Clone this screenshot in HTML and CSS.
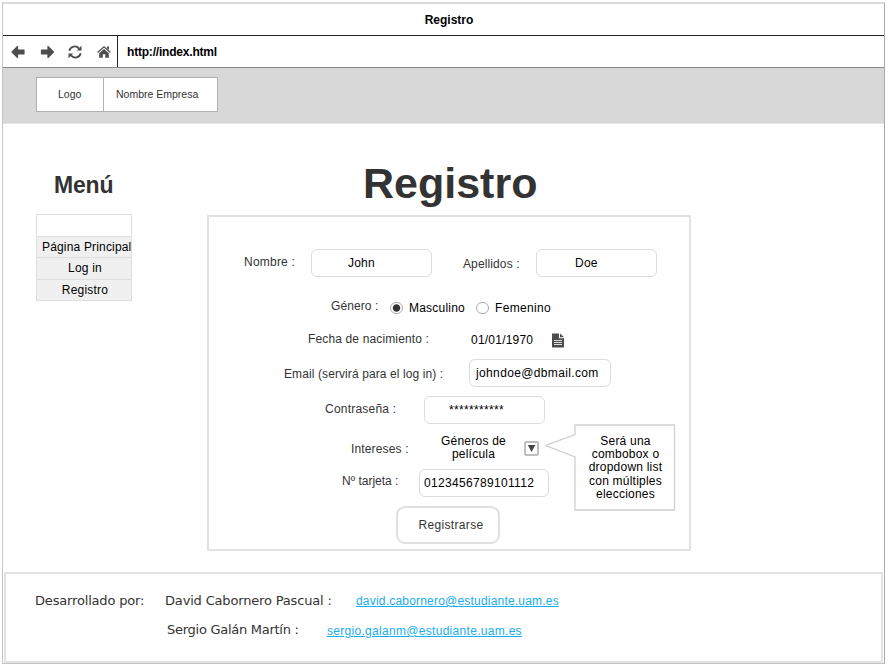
FILE: index.html
```html
<!DOCTYPE html>
<html lang="es">
<head>
<meta charset="utf-8">
<title>Registro</title>
<link rel="stylesheet" href="styles.css">
</head>
<body>
<div class="window">
  <div class="titlebar">Registro</div>
  <div class="toolbar">
    <div class="nav">
      <svg width="14" height="14" viewBox="0 0 14 14"><path class="round" d="M1 7 6.500 1.500V5H13V9H6.500V12.500Z"/></svg>
      <svg width="14" height="14" viewBox="0 0 14 14"><path class="round" d="M13.500 7 8 1.500V5H1.500V9H8V12.500Z"/></svg>
      <svg width="14" height="14" viewBox="0 0 14 14"><path class="stroke" d="M1.300 5.800A5.500 5.500 0 0 1 11 3.600M12.700 8.200A5.500 5.500 0 0 1 3 10.400"/><path d="M13.500.8V5.500H8.800ZM.5 13.200V8.500H5.200Z"/></svg>
      <svg width="14" height="14" viewBox="0 0 14 14"><path class="roof" d="M.6 7.400 7 1.800 13.400 7.400"/><path d="M10 1.500H12V5L10 3.300ZM7 4 11.800 8.200V12.800H8.300V9.300H5.700V12.800H2.200V8.200Z"/></svg>
    </div>
    <div class="address">http://index.html</div>
  </div>
  <header class="header">
    <div class="brand">
      <div class="logo">Logo</div>
      <div class="company">Nombre Empresa</div>
    </div>
  </header>
  <div class="body">
    <aside class="sidebar">
      <h2>Menú</h2>
      <ul class="menu">
        <li class="blank"></li>
        <li class="main-page">Página Principal</li>
        <li>Log in</li>
        <li>Registro</li>
      </ul>
    </aside>
    <main class="content">
      <h1>Registro</h1>
      <form class="panel">
        <div class="row row-name">
          <label class="l-name">Nombre :</label>
          <div class="field f-name">John</div>
          <label class="l-last">Apellidos :</label>
          <div class="field f-last">Doe</div>
        </div>
        <div class="row row-gender">
          <label class="l-gender">Género :</label>
          <span class="radio checked"></span><span class="male">Masculino</span>
          <span class="radio"></span><span class="female">Femenino</span>
        </div>
        <div class="row row-birth">
          <label class="l-birth">Fecha de nacimiento :</label>
          <span class="date">01/01/1970</span>
          <svg width="13" height="15" viewBox="0 0 13 15"><path fill="#4d4d4d" d="M0 .5H7V5.200H12V14.500H0ZM8 .5 12 4.300H8Z"/><path stroke="#ddd" d="M2 7.500H10M2 9.500H10M2 11.500H10"/></svg>
        </div>
        <div class="row row-email">
          <label class="l-email">Email (servirá para el log in) :</label>
          <div class="field f-email">johndoe@dbmail.com</div>
        </div>
        <div class="row row-pass">
          <label class="l-pass">Contraseña :</label>
          <div class="field f-pass">***********</div>
        </div>
        <div class="row row-interest">
          <label class="l-interest">Intereses :</label>
          <div class="genres">Géneros de<br>película</div>
          <svg class="drop" width="15" height="15" viewBox="0 0 15 15"><rect x="1" y="1" width="13" height="13" rx="1" fill="#fff" stroke="#aaa" stroke-width="1.500"/><path fill="#444" d="M3.800 4H11.300L7.600 11Z"/></svg>
          <div class="callout">
            <svg width="132" height="88" viewBox="0 0 132 88"><path fill="#fff" stroke="#d0d0d0" stroke-width="1.300" d="M30 1H129.500V86H30V33L.8 21.500 30 10.500Z"/></svg>
            <p>Será una<br>combobox o<br>dropdown list<br>con múltiples<br>elecciones</p>
          </div>
        </div>
        <div class="row row-card">
          <label class="l-card">Nº tarjeta :</label>
          <div class="field f-card">0123456789101112</div>
        </div>
        <button type="button" class="submit">Registrarse</button>
      </form>
    </main>
  </div>
  <footer class="footer">
    <span class="dev">Desarrollado por:</span>
    <div class="people">
      <div class="person"><span class="p1">David Cabornero Pascual :</span><a class="a1">david.cabornero@estudiante.uam.es</a></div>
      <div class="person second"><span class="p2">Sergio Galán Martín :</span><a class="a2">sergio.galanm@estudiante.uam.es</a></div>
    </div>
  </footer>
</div>
</body>
</html>
```
FILE: styles.css
```css
* { box-sizing: border-box; }
body {
  margin: 0;
  background: #fff;
  color: #000;
  font: 12px/14px "Liberation Sans", Arial, sans-serif;
  letter-spacing: .22px;
}
h1, h2, p, ul { margin: 0; padding: 0; }
.window {
  width: 883px;
  height: 662px;
  margin: 2px 0 0 2px;
  border: 1px solid #c4c4c4;
  border-top: 2px solid #dadada;
  border-right-color: #aaa;
  white-space: nowrap;
}
.titlebar {
  height: 32px;
  padding-left: 11px;
  border-bottom: 1px solid #222;
  font-weight: bold;
  letter-spacing: 0;
  line-height: 32px;
  text-align: center;
}
.toolbar {
  display: flex;
  height: 32px;
  border-bottom: 1px solid #888;
  font-weight: bold;
  letter-spacing: 0;
}
.nav {
  display: flex;
  align-items: center;
  gap: 14.500px;
  width: 115px;
  padding-left: 8px;
  border-right: 1px solid #222;
}
.nav svg { flex: none; fill: #4d4d4d; }
.nav .round { stroke: #4d4d4d; stroke-width: 1.200; stroke-linejoin: round; }
.nav .stroke { fill: none; stroke: #4d4d4d; stroke-width: 1.800; }
.nav .roof { fill: none; stroke: #4d4d4d; stroke-width: 1.300; }
.address { padding-left: 9px; line-height: 32px; letter-spacing: -.2px; }
.header {
  height: 56px;
  padding: 9px 0 0 33px;
  background: #d8d8d8;
  border-bottom: 1px solid #e4e4e4;
}
.brand {
  display: flex;
  width: 182px;
  height: 35px;
  border: 1px solid #b0b0b0;
  background: #fff;
  color: #333;
  font-size: 10.500px;
  line-height: 33px;
  letter-spacing: 0;
}
.logo { width: 67px; padding-left: 21px; border-right: 1px solid #b0b0b0; }
.company { padding-left: 12px; }
.body { display: flex; height: 448px; }
.sidebar { width: 204px; padding: 48px 0 0 33px; }
h2 {
  padding-left: 18px;
  color: #333;
  font-size: 23px;
  line-height: 26px;
  letter-spacing: -.2px;
}
.menu {
  width: 96px;
  height: 87px;
  margin-top: 16px;
  border: 1px solid #dedede;
  list-style: none;
}
.menu li {
  height: 21.300px;
  border-top: 1px solid #dedede;
  background: #f0f0f0;
  line-height: 20px;
  text-align: center;
  padding-left: 2px;
}
.menu .blank { border: 0; height: 21px; background: #fff; }
.menu .main-page { padding-left: 5px; text-align: left; overflow: hidden; letter-spacing: .17px; }
.content { width: 484px; padding-top: 35px; }
h1 {
  padding-left: 156px;
  color: #333;
  font-size: 43px;
  line-height: 48px;
  letter-spacing: 0;
}
.panel { height: 336px; margin-top: 8px; padding-top: 32px; border: 2px solid #e2e2e2; }
.row { display: flex; align-items: center; position: relative; }
label { flex: none; color: #333; }
.field {
  flex: none;
  height: 28px;
  border: 1px solid #dcdcdc;
  border-radius: 6px;
  line-height: 26px;
  background: #fff;
}
.row-name { height: 28px; padding-left: 35px; }
.l-name { width: 67px; padding-bottom: 3px; }
.f-name { width: 121px; padding-left: 36px; }
.l-last { width: 73px; margin-left: 31px; padding: 1px 0 0; letter-spacing: .12px; }
.f-last { width: 121px; padding-left: 38px; }
.row-gender { height: 24px; margin-top: 19px; padding-left: 122px; }
.l-gender { width: 59px; padding-bottom: 4px; letter-spacing: .1px; }
.radio {
  flex: none;
  width: 12.500px;
  height: 12.500px;
  border: 1px solid #aaa;
  border-radius: 50%;
}
.checked { background: radial-gradient(circle, #333 3.200px, #fff 4.200px); }
.male { width: 67px; margin-left: 6.500px; }
.female { margin-left: 6.500px; letter-spacing: .32px; }
.row-birth { height: 24px; margin-top: 8px; padding-left: 99px; }
.l-birth { width: 163px; padding-bottom: 2px; letter-spacing: .14px; }
.date { width: 81px; }
.row-email { height: 28px; margin-top: 7px; padding-left: 75px; }
.l-email { width: 185px; padding-top: 1px; letter-spacing: .1px; }
.f-email { width: 142px; padding-left: 6px; letter-spacing: .36px; }
.row-pass { height: 28px; margin-top: 9px; padding-left: 116px; }
.l-pass { width: 99px; padding-bottom: 2px; }
.f-pass { width: 121px; padding-left: 24px; letter-spacing: .32px; }
.row-interest { height: 26px; margin-top: 11px; padding-left: 142px; }
.l-interest { width: 80px; padding-top: 1px; letter-spacing: .15px; }
.genres { width: 85px; text-align: center; line-height: 13px; }
.drop { margin-left: 8px; margin-top: 1px; }
.callout { position: absolute; left: 336px; top: -11px; width: 132px; height: 88px; }
.callout svg { display: block; }
.callout p { position: absolute; left: 30px; top: 11px; width: 101px; line-height: 13.200px; text-align: center; }
.row-card { height: 28px; margin-top: 8px; padding-left: 133px; }
.l-card { width: 77px; padding-bottom: 4px; letter-spacing: 0; }
.f-card { width: 130px; padding-left: 4px; letter-spacing: .32px; }
.submit {
  display: block;
  width: 104px;
  height: 38px;
  margin: 9px 0 0 187px;
  padding: 0 0 0 6px;
  border: 2px solid #e0e0e0;
  border-radius: 9px;
  background: #fff;
  color: #333;
  font: inherit;
  letter-spacing: .35px;
}
.footer {
  display: flex;
  width: 879px;
  height: 91px;
  margin-left: 1px;
  border: 2px solid #e2e2e2;
  padding: 19px 0 0 29px;
  color: #333;
  font: 13px/16px "DejaVu Sans", Verdana, sans-serif;
  letter-spacing: -.17px;
}
.dev { width: 130px; }
.person { display: flex; height: 29px; }
.p1 { width: 191px; }
.second { padding-left: 2px; }
.p2 { width: 160px; letter-spacing: -.27px; }
.person a {
  color: #17aef0;
  font: 12px/16px "Liberation Sans", Arial, sans-serif;
  letter-spacing: .2px;
  text-decoration: underline;
}
.second a { padding-top: 1px; letter-spacing: .3px; }
```
